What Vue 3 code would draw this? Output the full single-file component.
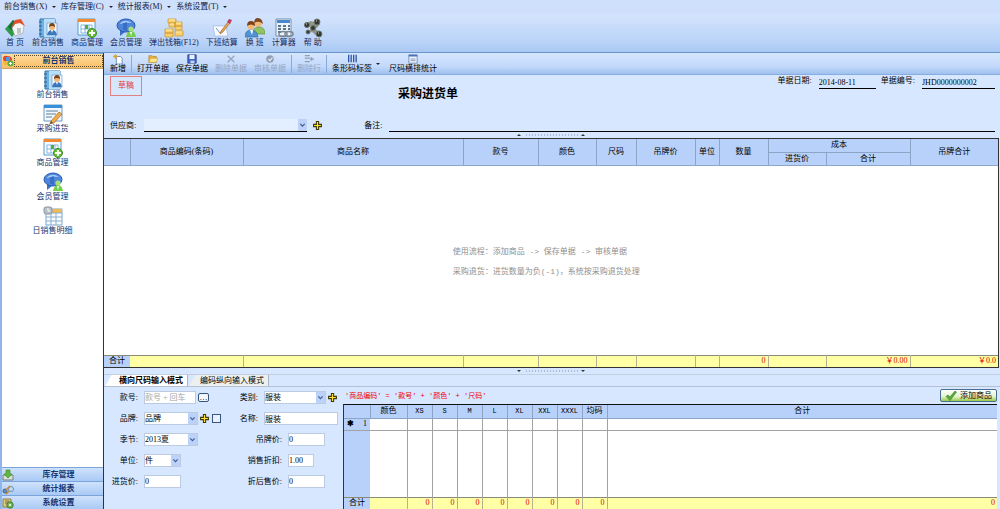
<script setup>
import { ref } from 'vue'

const menus = ['前台销售(X)', '库存管理(C)', '统计报表(M)', '系统设置(T)']

const tools = [
  { icon: 'home', label: '首 页' },
  { icon: 'book', label: '前台销售' },
  { icon: 'goods', label: '商品管理' },
  { icon: 'member', label: '会员管理' },
  { icon: 'coins', label: '弹出钱箱(F12)' },
  { icon: 'pen', label: '下班结算' },
  { icon: 'people', label: '换 班' },
  { icon: 'calc', label: '计算器' },
  { icon: 'help', label: '帮 助' },
]

const shortcuts = [
  { icon: 'book', label: '前台销售' },
  { icon: 'edit', label: '采购进货' },
  { icon: 'goods', label: '商品管理' },
  { icon: 'member', label: '会员管理' },
  { icon: 'sheet', label: '日销售明细' },
]

const groups = [
  { icon: 'stock', label: '库存管理' },
  { icon: 'report', label: '统计报表' },
  { icon: 'setting', label: '系统设置' },
]

const sizes = ['XS', 'S', 'M', 'L', 'XL', 'XXL', 'XXXL', '均码']

const supplier = ref('')
const remark = ref('')
const docDate = ref('2014-08-11')
const docNo = ref('JHD0000000002')
const styleNo = ref('')
const goodsName = ref('服装')
const tagPrice = ref('0')
const discount = ref('1.00')
const cost = ref('0')
const salePrice = ref('0')
</script>

<template>
  <svg class="defs" width="0" height="0" aria-hidden="true">
    <symbol id="home" viewBox="0 0 20 20">
      <path d="M0 11 8 2l5 9-6 8z" fill="#2f9a48" />
      <path d="M8 2 3 9l4 4 5-8z" fill="#1c6b3c" />
      <path d="M7 10 12 3l7 4-1 8-8 3z" fill="#f4f4f0" stroke="#9a9a9a" stroke-width=".6" />
      <path d="M6 10 10 2l6-1 4 7-5-3-5 1z" fill="#e2512c" />
      <path d="M12 10h4v5l-4 1z" fill="#b9c4cc" />
    </symbol>
    <symbol id="book" viewBox="0 0 20 20">
      <path d="M2 1h15v18H2z" fill="#6fb1e2" stroke="#2e75ad" />
      <path d="M6 1h11v18H6z" fill="#b9defa" />
      <path d="M1 4h3M1 8h3M1 12h3M1 16h3" stroke="#315d86" stroke-width="1.2" />
      <path d="M9 5h10v12H9z" fill="#eef7ff" stroke="#5d91b8" stroke-width=".6" />
      <circle cx="14" cy="9" r="3" fill="#f1b77a" />
      <path d="M11 9q0-4 3-4t3 4q-3-2-6 0z" fill="#7b4217" />
      <path d="M9 17q1-5 5-5t5 5z" fill="#3b78bb" />
      <path d="m13 12 1 3 1-3z" fill="#fff" />
    </symbol>
    <symbol id="goods" viewBox="0 0 20 20">
      <path d="M1 1h17v16H1z" fill="#f5fbff" stroke="#5d9bca" />
      <path d="M1 1h17v3H1z" fill="#f18a32" />
      <path d="M4 7h11v8H4zM4 11h11M8 7v8M12 7v8" fill="#fff" stroke="#6aa7d6" stroke-width=".8" />
      <path d="M8 7h3v4H8z" fill="#58aa39" />
      <circle cx="15" cy="15" r="4.5" fill="#69bd36" stroke="#398e25" />
      <path d="M15 12v6M12 15h6" stroke="#fff" stroke-width="1.8" />
    </symbol>
    <symbol id="member" viewBox="0 0 20 20">
      <path d="M4 12v6l5-4z" fill="#3a70c8" />
      <ellipse cx="10" cy="7.5" rx="9" ry="6.5" fill="#4d87db" stroke="#2858ad" />
      <path d="M3 6q6-6 13-1-6-1-13 1z" fill="#a4c9fa" />
      <path d="M8 5v7M10 4v9" stroke="#2857ae" />
      <circle cx="15" cy="11" r="2.6" fill="#a6e178" />
      <path d="M10 19q1-6 5-6t5 6z" fill="#75cf4d" />
      <path d="m14 14 1 4 1-4z" fill="#fff" />
    </symbol>
    <symbol id="coins" viewBox="0 0 20 20">
      <g fill="#f7d06c" stroke="#d09a35" stroke-width=".8">
        <path d="M4 1h8v4H4zM11 4h7v4h-7zM5 5h6v4H5zM11 8h7v4h-7zM1 11h8v4H1zM1 15h8v4H1zM11 13h8v5h-8z" />
      </g>
      <path d="M5 2h6M12 5h5M6 6h4M2 12h6M12 14h6" stroke="#fff0a8" />
    </symbol>
    <symbol id="pen" viewBox="0 0 20 20">
      <path d="M1 8h13l2 10H3z" fill="#fafcff" stroke="#a5b5d8" stroke-width=".7" />
      <path d="m4 10 4 5 4-5" fill="none" stroke="#7597cf" />
      <path d="m9 13 7-9 2 1-7 9-3 2z" fill="#e3a64d" stroke="#9f6334" stroke-width=".6" />
      <path d="m15 4 2-3 3 1-2 4z" fill="#bd3d65" />
    </symbol>
    <symbol id="people" viewBox="0 0 20 20">
      <circle cx="13" cy="5" r="4" fill="#f0b879" />
      <path d="M9 5q0-5 4-5t5 6q-4-4-9-1z" fill="#7f4721" />
      <path d="M8 16q0-7 6-7t6 7z" fill="#8fc45f" stroke="#5c8c38" stroke-width=".6" />
      <circle cx="6" cy="8" r="3.6" fill="#f2b877" />
      <path d="M2 8q0-5 4-5t4 5q-4-3-8 0z" fill="#7b431b" />
      <path d="M0 19q0-7 6-7t7 7z" fill="#5392d2" stroke="#2d669c" stroke-width=".6" />
      <path d="m5 12 2 5 1-5z" fill="#fff" />
    </symbol>
    <symbol id="calc" viewBox="0 0 20 20">
      <path d="M2 1h15v17H2z" fill="#eef3f9" stroke="#7890ae" />
      <path d="M3 2h13v3H3z" fill="#4688d2" />
      <path d="M4 8h3M9 8h3M14 8h2M4 11h3M9 11h3M14 11h2M4 14h3" stroke="#597690" stroke-width="2" />
      <ellipse cx="9" cy="16" rx="4" ry="2.4" fill="none" stroke="#7b8792" stroke-width="1.5" />
      <ellipse cx="15" cy="16" rx="4" ry="2.4" fill="none" stroke="#7b8792" stroke-width="1.5" />
    </symbol>
    <symbol id="help" viewBox="0 0 20 20">
      <path d="M2 5l6-2 9 3-3 4-8-2zM4 13l7-3 7 5-3 4-6-5-4 1z" fill="#8e978a" />
      <g fill="#343834" stroke="#707770">
        <circle cx="4" cy="7" r="2.600" /><circle cx="14" cy="4" r="3" />
        <circle cx="10" cy="10" r="2.500" /><circle cx="16" cy="16" r="3" /><circle cx="5" cy="14" r="2" />
      </g>
      <path d="M3 6h1M13 3h1M15 15h1" stroke="#d9dfd5" />
    </symbol>
    <symbol id="edit" viewBox="0 0 20 20">
      <path d="M1 1h18v16H1z" fill="#f2f8fd" stroke="#6d9bc0" />
      <path d="M1 1h18v3H1z" fill="#3990d8" />
      <path d="M3 7h12M3 10h10M3 13h6" stroke="#8da8bb" stroke-width="1.3" />
      <path d="m8 17 8-9 3 2-8 9-4 1z" fill="#eeac4c" stroke="#a5692b" stroke-width=".7" />
      <path d="m7 20 1-3 2 2z" fill="#5d4a38" />
    </symbol>
    <symbol id="sheet" viewBox="0 0 20 20">
      <path d="M3 3h16v16H3z" fill="#f7fbff" stroke="#7ba6c8" />
      <path d="M8 3h11v4H8z" fill="#f2ba56" />
      <path d="M3 7h16M3 11h16M3 15h16M8 7v12M13 7v12" stroke="#8bb0cf" />
      <rect x="1" y="1" width="8" height="7" rx="2" fill="#b6c1ca" stroke="#8897a4" />
      <path d="M5 2v3h2" stroke="#fff" fill="none" />
    </symbol>
    <symbol id="shop" viewBox="0 0 12 12">
      <path d="M1 4q0-4 4-3 5 0 5 4l-2 4H3z" fill="#dc4331" />
      <path d="M4 2h4v4H4z" fill="#5595db" />
      <path d="M1 6h5v4H2z" fill="#f4b83b" />
      <circle cx="8.5" cy="8.5" r="3" fill="#5bb23d" />
      <path d="M8.500 7v3M7 8.500h3" stroke="#fff" />
    </symbol>
    <symbol id="stock" viewBox="0 0 12 12">
      <path d="M1 6h10v5H1z" fill="#d9dfdc" stroke="#74847e" />
      <path d="M4 1h4v4h2L6 9 2 5h2z" fill="#64b83c" stroke="#37841e" stroke-width=".6" />
    </symbol>
    <symbol id="report" viewBox="0 0 12 12">
      <circle cx="3" cy="8" r="2" fill="#5a95cf" stroke="#3b6290" />
      <circle cx="9" cy="6" r="2.500" fill="#bfdcf5" stroke="#6b93b9" />
      <path d="m4 7 4-4M7 8l-3 3" stroke="#c8862f" stroke-width="1.500" />
    </symbol>
    <symbol id="setting" viewBox="0 0 12 12">
      <path d="M1 2h8v8H1z" fill="#dfc978" stroke="#8e824e" />
      <path d="M3 4h4M3 6h4" stroke="#75704f" />
      <circle cx="8" cy="8" r="3.200" fill="#73b552" stroke="#447b32" />
      <circle cx="8" cy="8" r="1" fill="#fff" />
    </symbol>
    <symbol id="new" viewBox="0 0 12 12">
      <path d="M4 3h5l2 2v7H4z" fill="#fff" stroke="#5c7eac" />
      <path d="M3 0v6M0 3h6M1 1l4 4M5 1 1 5" stroke="#d9a422" />
    </symbol>
    <symbol id="open" viewBox="0 0 12 12">
      <path d="M1 2h4l1 1h4v7H1z" fill="#e6b33f" stroke="#ad7a1d" stroke-width=".7" />
      <path d="M3 5h9l-2 5H1z" fill="#ffe58b" stroke="#c89a30" stroke-width=".7" />
    </symbol>
    <symbol id="save" viewBox="0 0 12 12">
      <path d="M1 1h10v10H1z" fill="#4169c8" stroke="#233f8d" />
      <path d="M3 1h6v5H3z" fill="#e9f1ff" />
      <path d="M4 8h5v3H4z" fill="#c8d3e8" />
    </symbol>
    <symbol id="delete" viewBox="0 0 12 12">
      <path d="m2 2 8 8M10 2l-8 8" stroke="#98a5bd" stroke-width="1.600" />
    </symbol>
    <symbol id="audit" viewBox="0 0 12 12">
      <circle cx="6" cy="6" r="4.500" fill="#929eb2" />
      <path d="m4 6 2 2 3-4" fill="none" stroke="#e3ebf8" stroke-width="1.300" />
    </symbol>
    <symbol id="delrow" viewBox="0 0 12 12">
      <path d="M1 2h6M1 5h6M1 9h6M7 6h5M9 4v4" stroke="#929eb2" stroke-width="1.500" />
    </symbol>
    <symbol id="barcode" viewBox="0 0 12 12">
      <path d="M2 1v9M5 1v9M8 1v9M11 1v9" stroke="#3158a7" stroke-width="1.600" />
    </symbol>
    <symbol id="stat" viewBox="0 0 12 12">
      <path d="M1 1h10v10H1z" fill="#edf4ff" stroke="#6c83ac" />
      <path d="M1 2h10" stroke="#4774bc" stroke-width="2" />
      <path d="M3 6h6M3 8h6" stroke="#7a8ca8" />
    </symbol>
    <symbol id="plus" viewBox="0 0 8 8">
      <path d="M3 .5h2V3h2.500v2H5v2.500H3V5H.5V3H3z" fill="#ffe02a" stroke="#3e3500" stroke-width=".9" />
    </symbol>
    <symbol id="chevron" viewBox="0 0 8 10">
      <path d="m2 4 2 2 2-2" fill="none" stroke="#3c5a94" />
    </symbol>
    <symbol id="tick" viewBox="0 0 12 10">
      <path d="M1 5.500 3 4l2 2 5-6 1.500 1L5 9.500z" fill="#58ab3e" stroke="#327b26" stroke-width=".6" />
    </symbol>
    <symbol id="grip-up" viewBox="0 0 72 4">
      <path d="m1 3 2-2 2 2zM65 3l2-2 2 2z" fill="#333" />
      <path d="M10 2h52" stroke="#8290a8" stroke-dasharray="1 2" />
    </symbol>
    <symbol id="grip-down" viewBox="0 0 72 4">
      <path d="m1 1 2 2 2-2zM65 1l2 2 2-2z" fill="#333" />
      <path d="M10 2h52" stroke="#8290a8" stroke-dasharray="1 2" />
    </symbol>
  </svg>

  <div class="window">
    <nav class="menubar">
      <button v-for="m in menus" :key="m" type="button">{{ m }}<i class="caret"></i></button>
    </nav>

    <div class="toolbar">
      <button v-for="t in tools" :key="t.label" type="button">
        <svg><use :href="'#' + t.icon" /></svg>
        <span>{{ t.label }}</span>
      </button>
    </div>

    <div class="workspace">
      <aside class="sidebar">
        <button type="button" class="group active">
          <svg><use href="#shop" /></svg><span>前台销售</span>
        </button>
        <div class="shortcuts">
          <button v-for="s in shortcuts" :key="s.label" type="button">
            <svg><use :href="'#' + s.icon" /></svg>
            <span>{{ s.label }}</span>
          </button>
        </div>
        <button v-for="g in groups" :key="g.label" type="button" class="group">
          <svg><use :href="'#' + g.icon" /></svg><span>{{ g.label }}</span>
        </button>
      </aside>

      <main class="main">
        <div class="actions">
          <button type="button"><svg><use href="#new" /></svg><span>新增</span></button>
          <i class="sep"></i>
          <button type="button"><svg><use href="#open" /></svg><span>打开单据</span></button>
          <button type="button"><svg><use href="#save" /></svg><span>保存单据</span></button>
          <button type="button" disabled><svg><use href="#delete" /></svg><span>删除单据</span></button>
          <button type="button" disabled><svg><use href="#audit" /></svg><span>审核单据</span></button>
          <i class="sep"></i>
          <button type="button" disabled><svg><use href="#delrow" /></svg><span>删除行</span></button>
          <i class="sep"></i>
          <button type="button"><svg><use href="#barcode" /></svg><span>条形码标签</span></button>
          <i class="caret"></i>
          <button type="button"><svg><use href="#stat" /></svg><span>尺码横排统计</span></button>
        </div>

        <section class="doc">
          <div class="doc-top">
            <span class="stamp">草稿</span>
            <h1>采购进货单</h1>
            <label for="doc-date">单据日期:</label>
            <input id="doc-date" v-model="docDate" class="line date" />
            <label for="doc-no">单据编号:</label>
            <input id="doc-no" v-model="docNo" class="line no" />
          </div>
          <div class="doc-bottom">
            <label for="supplier">供应商:</label>
            <span class="combo supplier">
              <select id="supplier" v-model="supplier"><option value=""></option></select>
              <svg><use href="#chevron" /></svg>
            </span>
            <button type="button" class="add" aria-label="新增供应商"><svg><use href="#plus" /></svg></button>
            <label for="remark" class="remark-label">备注:</label>
            <input id="remark" v-model="remark" class="line remark" />
          </div>
        </section>

        <div class="splitter"><svg><use href="#grip-up" /></svg></div>

        <div class="grid-box">
          <table class="grid">
            <colgroup>
              <col class="w26" /><col class="w113" /><col /><col class="w75" /><col class="w58" />
              <col class="w40" /><col class="w59" /><col class="w24" /><col class="w49" />
              <col class="w58" /><col class="w84" /><col class="w88" />
            </colgroup>
            <thead>
              <tr>
                <th rowspan="2"></th>
                <th rowspan="2">商品编码(条码)</th>
                <th rowspan="2">商品名称</th>
                <th rowspan="2">款号</th>
                <th rowspan="2">颜色</th>
                <th rowspan="2">尺码</th>
                <th rowspan="2">吊牌价</th>
                <th rowspan="2">单位</th>
                <th rowspan="2">数量</th>
                <th colspan="2">成本</th>
                <th rowspan="2">吊牌合计</th>
              </tr>
              <tr><th>进货价</th><th>合计</th></tr>
            </thead>
            <tbody>
              <tr>
                <td colspan="12" class="hint">
                  <div>
                    <p>使用流程：添加商品 -&gt; 保存单据 -&gt; 审核单据</p>
                    <p>采购退货：进货数量为负(-1)，系统按采购退货处理</p>
                  </div>
                </td>
              </tr>
            </tbody>
            <tfoot>
              <tr>
                <th>合计</th>
                <td></td><td></td><td></td><td></td><td></td><td></td><td></td>
                <td>0</td><td></td><td>￥0.00</td><td>￥0.0</td>
              </tr>
            </tfoot>
          </table>
        </div>

        <div class="splitter"><svg><use href="#grip-down" /></svg></div>

        <div class="tabs" role="tablist">
          <button type="button" role="tab" aria-selected="true" class="tab on">横向尺码输入模式</button>
          <button type="button" role="tab" aria-selected="false" class="tab">编码纵向输入模式</button>
        </div>

        <section class="entry">
          <form class="fields" @submit.prevent>
            <div class="field">
              <label for="f-style">款号:</label>
              <input id="f-style" v-model="styleNo" class="w52" placeholder="款号 + 回车" />
              <button type="button" class="more" aria-label="选择款号">…</button>
            </div>
            <div class="field">
              <label for="f-kind">类别:</label>
              <span class="combo box w62">
                <select id="f-kind"><option>服装</option></select>
                <svg><use href="#chevron" /></svg>
              </span>
              <button type="button" class="add" aria-label="新增类别"><svg><use href="#plus" /></svg></button>
            </div>
            <div class="field">
              <label for="f-brand">品牌:</label>
              <span class="combo box w54">
                <select id="f-brand"><option>品牌</option></select>
                <svg><use href="#chevron" /></svg>
              </span>
              <button type="button" class="add" aria-label="新增品牌"><svg><use href="#plus" /></svg></button>
              <input type="checkbox" class="check" aria-label="锁定品牌" />
            </div>
            <div class="field">
              <label for="f-name">名称:</label>
              <input id="f-name" v-model="goodsName" class="w74" />
            </div>
            <div class="field">
              <label for="f-season">季节:</label>
              <span class="combo box w54">
                <select id="f-season"><option>2013夏</option></select>
                <svg><use href="#chevron" /></svg>
              </span>
            </div>
            <div class="field wide">
              <label for="f-tag">吊牌价:</label>
              <input id="f-tag" v-model="tagPrice" class="w37" />
            </div>
            <div class="field">
              <label for="f-unit">单位:</label>
              <span class="combo box w37">
                <select id="f-unit"><option>件</option></select>
                <svg><use href="#chevron" /></svg>
              </span>
            </div>
            <div class="field wide">
              <label for="f-disc">销售折扣:</label>
              <input id="f-disc" v-model="discount" class="w26" />
            </div>
            <div class="field">
              <label for="f-cost">进货价:</label>
              <input id="f-cost" v-model="cost" class="w37" />
            </div>
            <div class="field wide">
              <label for="f-sale">折后售价:</label>
              <input id="f-sale" v-model="salePrice" class="w37" />
            </div>
          </form>

          <div class="matrix">
            <div class="matrix-top">
              <span class="rule">'商品编码' = '款号' + '颜色' + '尺码'</span>
              <button type="button" class="add-goods"><svg><use href="#tick" /></svg>添加商品</button>
            </div>
            <div class="size-box">
              <table class="sizes">
                <colgroup>
                  <col class="w26" /><col class="w37" />
                  <col v-for="s in sizes" :key="s" class="w25" />
                  <col />
                </colgroup>
                <thead>
                  <tr>
                    <th></th><th>颜色</th>
                    <th v-for="s in sizes" :key="s" :class="{ code: s !== '均码' }">{{ s }}</th>
                    <th>合计</th>
                  </tr>
                </thead>
                <tbody>
                  <tr class="entry-row">
                    <th><span class="marker"><b>✱</b><i>1</i></span></th>
                    <td v-for="n in 10" :key="n"></td>
                  </tr>
                  <tr class="rest">
                    <th></th>
                    <td v-for="n in 10" :key="n"></td>
                  </tr>
                </tbody>
                <tfoot>
                  <tr>
                    <th>合计</th><td></td>
                    <td v-for="n in 9" :key="n">0</td>
                  </tr>
                </tfoot>
              </table>
            </div>
          </div>
        </section>
      </main>
    </div>
  </div>
</template>

<style>
html,
body {
  margin: 0;
}
</style>

<style scoped>
.defs {
  position: absolute;
}
.window {
  height: 100vh;
  display: flex;
  flex-direction: column;
  overflow: hidden;
  background: #d6e7ff;
  color: #000;
  font: 8px/10px 'Liberation Serif', 'Noto Sans CJK SC', serif;
}
.window * {
  box-sizing: border-box;
}
button,
input,
select {
  font: inherit;
  color: inherit;
  margin: 0;
  padding: 0;
  border: 0;
  border-radius: 0;
  background: none;
  white-space: nowrap;
}
svg {
  display: block;
  flex: none;
}
.caret {
  display: inline-block;
  flex: none;
  border: 2px solid transparent;
  border-top-color: #222;
  border-bottom: 0;
}

/* menu and main toolbar */
.menubar {
  flex: none;
  height: 14px;
  display: flex;
  gap: 5px;
  padding: 0 4px;
  background: #cfe0fc;
}
.menubar button {
  display: flex;
  align-items: center;
  gap: 5px;
  color: #10203f;
}
.toolbar {
  flex: none;
  height: 39px;
  display: flex;
  align-items: flex-start;
  gap: 7px;
  padding: 4px 5px 0;
  background: linear-gradient(#d4e4fd, #b9d3f8 75%, #a8c8f3);
  border-bottom: 1px solid #6a94cc;
}
.toolbar button {
  display: flex;
  flex-direction: column;
  align-items: center;
  color: #15295a;
}
.toolbar svg {
  width: 20px;
  height: 20px;
}

.workspace {
  flex: 1;
  min-height: 0;
  display: flex;
}

/* sidebar */
.sidebar {
  flex: none;
  width: 103px;
  display: flex;
  flex-direction: column;
  border-left: 2px solid #8fb6e8;
  background: #fff;
}
.group {
  flex: none;
  height: 14px;
  display: flex;
  align-items: center;
  background: linear-gradient(#cfe2fc, #a9caf5);
  border-top: 1px solid #7ba4da;
  color: #17346e;
  font-weight: bold;
}
.group svg {
  width: 12px;
  height: 12px;
}
.group span {
  flex: 1;
}
.group.active {
  height: 16px;
  background: linear-gradient(#ffdca0, #fbbf66);
  border-bottom: 1px solid #c9a56b;
}
.group.active span {
  border: 1px dotted #5d4a28;
}
.shortcuts {
  flex: 1;
  display: flex;
  flex-direction: column;
  align-items: center;
  gap: 4px;
  padding-top: 1px;
}
.shortcuts button {
  display: flex;
  flex-direction: column;
  align-items: center;
  color: #17346e;
}
.shortcuts svg {
  width: 20px;
  height: 20px;
}

/* main column */
.main {
  flex: 1;
  min-width: 0;
  display: flex;
  flex-direction: column;
  border-left: 1px solid #333;
}
.actions {
  flex: none;
  height: 22px;
  display: flex;
  align-items: center;
  gap: 7px;
  padding: 0 6px;
  background: linear-gradient(#d6e6fe, #c2d9fb 65%, #9fc0ee);
  border-bottom: 1px solid #87aee2;
}
.actions button {
  display: flex;
  flex-direction: column;
  align-items: center;
}
.actions button:disabled {
  color: #98a6bf;
}
.actions svg {
  width: 10px;
  height: 10px;
}
.actions .sep {
  width: 1px;
  height: 18px;
  margin: 0 -2px;
  background: #8ba9d6;
}
.actions .caret {
  margin: 0 2px 0 -3px;
}

.doc {
  flex: none;
  padding: 1px 5px 0 6px;
}
.doc-top {
  display: flex;
  align-items: flex-start;
}
.stamp {
  width: 32px;
  border: 1px solid #e08080;
  color: #e03c3c;
  line-height: 18px;
  text-align: center;
}
.doc-top h1 {
  flex: 1;
  margin: 10px 0 0 256px;
  font-size: 12px;
  line-height: 16px;
  font-weight: bold;
}
.line {
  height: 13px;
  border-bottom: 1px solid #000;
}
.date {
  width: 57px;
  margin: 0 5px 0 7px;
}
.no {
  width: 73px;
  margin-left: 7px;
}
.doc-bottom {
  display: flex;
  align-items: center;
  padding-top: 17px;
}
.supplier {
  width: 163px;
  margin: 0 6px 0 8px;
  border-bottom: 1px solid #000;
  background: #e3efff;
}
.remark-label {
  margin-left: 42px;
}
.remark {
  flex: 1;
  min-width: 0;
  margin-left: 7px;
}
.combo {
  height: 13px;
  display: grid;
}
.combo select {
  grid-area: 1 / 1;
  width: 100%;
  appearance: none;
}
.combo svg {
  grid-area: 1 / 1;
  justify-self: end;
  width: 9px;
  height: 100%;
  background: #bcd2f8;
  pointer-events: none;
}
.add svg {
  width: 9px;
  height: 9px;
}

.splitter {
  flex: none;
  height: 6px;
  display: flex;
  justify-content: center;
  align-items: center;
}
.splitter svg {
  width: 72px;
  height: 4px;
}

/* tables */
.grid-box {
  flex: 1;
  min-height: 0;
  border: 1px solid #333;
  border-left: 0;
  margin-right: 1px;
  background: #fff;
}
table {
  width: 100%;
  height: 100%;
  table-layout: fixed;
  border-collapse: collapse;
}
th,
td {
  padding: 0;
  font-weight: normal;
  white-space: nowrap;
}
th {
  background: #b7d1fa;
}
thead th {
  border-right: 1px solid #8ea4c6;
  border-bottom: 1px solid #8ea4c6;
}
.grid thead tr {
  height: 13px;
}
tfoot tr {
  height: 12px;
}
tfoot th,
tfoot td {
  border-top: 1px solid #8a8a78;
}
tfoot td {
  padding-right: 2px;
  border-right: 1px solid #b5b18c;
  background: #ffffa5;
  color: #e00000;
  text-align: right;
}
thead th:last-child,
tfoot td:last-child {
  border-right: 0;
}
.grid thead tr:last-child th {
  border-right: 1px solid #8ea4c6;
}
.hint {
  color: #8f8f8f;
  font-family: 'Liberation Mono', 'Noto Sans CJK SC', monospace;
}
.hint div {
  padding: 4px 0 0 39%;
}
.hint p {
  margin: 0;
  line-height: 20px;
}

.w24 { width: 24px; }
.w25 { width: 25px; }
.w26 { width: 26px; }
.w37 { width: 37px; }
.w40 { width: 40px; }
.w49 { width: 49px; }
.w52 { width: 52px; }
.w54 { width: 54px; }
.w58 { width: 58px; }
.w59 { width: 59px; }
.w62 { width: 62px; }
.w74 { width: 74px; }
.w75 { width: 75px; }
.w84 { width: 84px; }
.w88 { width: 88px; }
.w113 { width: 113px; }

/* tabs */
.tabs {
  flex: none;
  height: 13px;
  display: flex;
  border-top: 1px solid #c3cede;
  border-bottom: 1px solid #b5c0d2;
}
.tab {
  padding: 0 4px 0 12px;
  background: linear-gradient(120deg, transparent 6px, #edf0ee 7px);
  border-right: 1px solid #a9b3c2;
}
.tab.on {
  padding-left: 15px;
  background: linear-gradient(120deg, transparent 6px, #fff 7px);
  font-weight: bold;
}

/* entry area */
.entry {
  flex: none;
  height: 122px;
  display: flex;
}
.fields {
  flex: none;
  width: 239px;
  display: grid;
  grid-template-columns: 120px 1fr;
  grid-auto-rows: 21px;
}
.field {
  display: flex;
  align-items: center;
  gap: 2px;
}
.field label {
  width: 34px;
  margin-right: 4px;
  text-align: right;
}
.field.wide label {
  width: 58px;
}
.field input,
.box {
  flex: none;
  height: 13px;
  border: 1px solid #bccbe2;
  background: #fff;
}
.field input::placeholder {
  color: #a5a5a5;
}
.more {
  width: 11px;
  height: 9px;
  border: 1px solid #35557f;
  border-radius: 2px;
  background: #f3f6fb;
  line-height: 3px;
}
.field .check {
  width: 9px;
  height: 9px;
  margin-left: 1px;
  appearance: none;
  border-color: #38567f;
  background: #e8f1ff;
}
.matrix {
  flex: 1;
  min-width: 0;
  display: flex;
  flex-direction: column;
  padding-right: 3px;
}
.matrix-top {
  flex: none;
  height: 17px;
  display: flex;
  align-items: center;
  justify-content: space-between;
}
.rule {
  padding-left: 2px;
  color: #f00000;
  font-family: 'Liberation Mono', 'Noto Sans CJK SC', monospace;
  font-size: 7px;
}
.add-goods {
  width: 57px;
  height: 13px;
  display: flex;
  align-items: center;
  justify-content: center;
  gap: 3px;
  border: 1px solid #4a6f96;
  border-radius: 2px;
  background: linear-gradient(#fff, #e2f1cc 60%, #96cc45);
}
.add-goods svg {
  width: 12px;
  height: 10px;
}
.size-box {
  flex: 1;
  min-height: 0;
  border-top: 1px solid #111;
  border-left: 1px solid #333;
  background: #fff;
}
.sizes thead tr {
  height: 13px;
}
.sizes .code {
  font-family: 'Liberation Mono', monospace;
  font-size: 7px;
}
.sizes tbody td {
  border-right: 1px solid #a2a2a2;
}
.sizes tbody td:last-child {
  border-right: 0;
}
.entry-row {
  height: 12px;
}
.entry-row td,
.entry-row th {
  border-bottom: 1px solid #a2a2a2;
}
.marker {
  display: flex;
  justify-content: space-between;
  padding: 0 3px;
}
.marker i {
  font-style: normal;
}
</style>
